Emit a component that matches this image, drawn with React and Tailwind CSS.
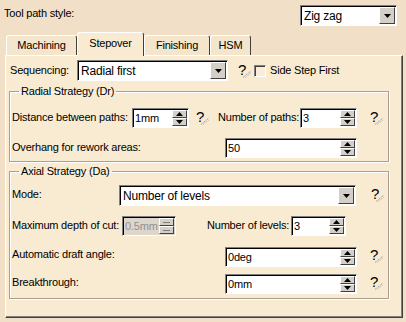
import React from "react"

function Tri({ up, color = "#000" }) {
  return (
    <svg width="7" height="4" viewBox="0 0 7 4">
      {up ? <polygon points="0,4 7,4 3.5,0" fill={color} /> : <polygon points="0,0 7,0 3.5,4" fill={color} />}
    </svg>
  )
}

function ArrowBtn({ up, disabled }) {
  return (
    <div className="flex h-[8px] items-center justify-center bg-[#d4d0c8] border border-t-white border-l-white border-r-[#404040] border-b-[#404040]">
      {disabled ? <div className="h-[1px] w-[7px] bg-[#808080]" /> : <Tri up={up} />}
    </div>
  )
}

function Spin({ value, w, disabled }) {
  return (
    <div className={`flex h-[20px] ${w} shrink-0 items-stretch border border-t-[#808080] border-l-[#808080] border-b-white border-r-white shadow-[inset_1px_1px_0_#000] ${disabled ? "bg-[#ddd6cc] text-[#909090]" : "bg-white"}`}>
      <span className="flex flex-1 items-center pl-[2px] pt-[1px]">{value}</span>
      <div className="flex w-[16px] flex-col py-[1px] pr-[1px]">
        <ArrowBtn up disabled={disabled} />
        <ArrowBtn disabled={disabled} />
      </div>
    </div>
  )
}

function Combo({ value, w }) {
  return (
    <div className={`flex h-[21px] ${w} shrink-0 items-center border border-t-[#808080] border-l-[#808080] border-b-white border-r-white bg-white shadow-[inset_1px_1px_0_#000]`}>
      <span className="flex-1 pl-[3px] pt-[1px] text-[12px]">{value}</span>
      <div className="mr-[1px] flex h-[17px] w-[16px] items-center justify-center border border-t-white border-l-white border-r-[#404040] border-b-[#404040] bg-[#d4d0c8]">
        <Tri />
      </div>
    </div>
  )
}

function Help() {
  return (
    <span className="relative inline-flex h-[15px] w-[13px] items-start">
      <span className="text-[15px] leading-[14px]">?</span>
      <svg className="absolute left-[4px] top-[7px]" width="10" height="8" viewBox="0 0 10 8">
        <path d="M1 7.5 L9 1" stroke="#8c8c8c" strokeWidth="1" strokeDasharray="1 1" />
        <path d="M3 7.5 L9 3" stroke="#b0b0b0" strokeWidth="1" strokeDasharray="1 1" />
      </svg>
    </span>
  )
}

function Tab({ label, w, active }) {
  return (
    <div
      className={`flex ${w} items-start justify-center rounded-t-[3px] border-l border-t border-r border-l-white border-t-white border-r-[#404040] ${
        active ? "relative z-10 -mb-[1px] h-[24px] bg-[#f8ebd2] pt-[4px]" : "h-[20px] bg-[#f4e5cd] pt-[3px]"
      }`}
    >
      {label}
    </div>
  )
}

export default function App() {
  return (
    <div className="h-[322px] w-[406px] overflow-hidden whitespace-nowrap bg-[#f1dfc8] font-['Liberation_Sans',Arial,sans-serif] text-[11px] leading-[13px] tracking-[-0.2px] text-black">
      {/*Tool path style*/}
      <div className="flex h-[32px] items-start justify-between pl-[4px] pr-[9px] pt-[5px]">
        <span className="pt-[2px]">Tool path style:</span>
        <Combo value="Zig zag" w="w-[97px]" />
      </div>

      {/*Tabs*/}
      <div className="flex h-[23px] items-end pl-[6px]">
        <Tab label="Machining" w="w-[71px]" />
        <Tab label="Stepover" w="w-[67px]" active />
        <Tab label="Finishing" w="w-[66px]" />
        <Tab label="HSM" w="w-[41px]" />
      </div>

      {/*Panel*/}
      <div className="ml-[5px] h-[263px] w-[398px] border-l border-t border-b border-r border-l-white border-t-white border-r-[#404040] border-b-[#404040] bg-[#f8ebd2] shadow-[inset_-1px_-1px_0_#808080]">
        <div className="flex items-start pl-[4px] pt-[4px]">
          <span className="w-[67px] shrink-0 pt-[4px]">Sequencing:</span>
          <Combo value="Radial first" w="w-[151px]" />
          <span className="ml-[10px] mt-[3px]"><Help /></span>
          <div className="ml-[3px] mt-[5px] h-[12px] w-[12px] border border-t-[#808080] border-l-[#808080] border-b-white border-r-white bg-[#f9ecd9] shadow-[inset_1px_1px_0_#404040]" />
          <span className="ml-[4px] pt-[4px]">Side Step First</span>
        </div>

        {/*Radial Strategy*/}
        <fieldset className="ml-[3px] mt-[4px] w-[380px] border border-[#a8a090] pb-[3px] pl-[2px] shadow-[inset_1px_1px_0_#fff,1px_1px_0_#fff]">
          <legend className="ml-[7px] px-[2px]">Radial Strategy (Dr)</legend>
          <div className="mt-[10px] flex items-start">
            <span className="w-[120px] shrink-0 pt-[3px]">Distance between paths:</span>
            <Spin value="1mm" w="w-[57px]" />
            <span className="ml-[7px] mt-[2px]"><Help /></span>
            <span className="ml-[9px] w-[82px] shrink-0 pt-[3px]">Number of paths:</span>
            <Spin value="3" w="w-[57px]" />
            <span className="ml-[13px] mt-[2px]"><Help /></span>
          </div>
          <div className="mt-[10px] flex items-start">
            <span className="w-[213px] shrink-0 pt-[3px]">Overhang for rework areas:</span>
            <Spin value="50" w="w-[132px]" />
          </div>
        </fieldset>

        {/*Axial Strategy*/}
        <fieldset className="ml-[3px] mt-[3px] w-[380px] border border-[#a8a090] pb-[4px] pl-[2px] shadow-[inset_1px_1px_0_#fff,1px_1px_0_#fff]">
          <legend className="ml-[7px] px-[2px]">Axial Strategy (Da)</legend>
          <div className="mt-[7px] flex items-start">
            <span className="w-[107px] shrink-0 pt-[3px]">Mode:</span>
            <Combo value="Number of levels" w="w-[237px]" />
            <span className="ml-[15px] mt-[2px]"><Help /></span>
          </div>
          <div className="mt-[10px] flex items-start">
            <span className="w-[110px] shrink-0 pt-[3px]">Maximum depth of cut:</span>
            <Spin value="0.5mm" w="w-[54px]" disabled />
            <span className="ml-[31px] w-[84px] shrink-0 pt-[3px]">Number of levels:</span>
            <Spin value="3" w="w-[55px]" />
          </div>
          <div className="mt-[11px] flex items-start">
            <span className="w-[213px] shrink-0 pt-[1px]">Automatic draft angle:</span>
            <Spin value="0deg" w="w-[132px]" />
            <span className="ml-[13px] mt-[1px]"><Help /></span>
          </div>
          <div className="mt-[7px] flex items-start">
            <span className="w-[213px] shrink-0 pt-[2px]">Breakthrough:</span>
            <Spin value="0mm" w="w-[132px]" />
            <span className="ml-[13px] mt-[1px]"><Help /></span>
          </div>
        </fieldset>
      </div>
    </div>
  )
}
